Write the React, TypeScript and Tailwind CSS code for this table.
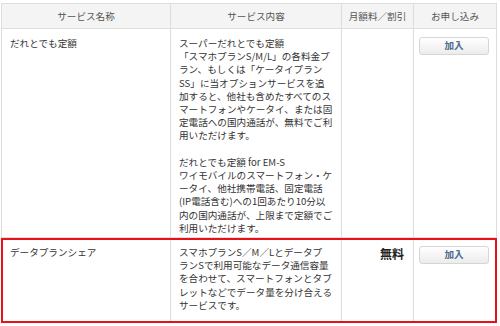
const cols = "grid grid-cols-[169px_171px_72px_82px]";

const headers = ["サービス名称", "サービス内容", "月額料／割引", "お申し込み"];

type Row = {
  name: string;
  body: string[][];
  price?: string;
  highlight?: boolean;
};

const rows: Row[] = [
  {
    name: "だれとでも定額",
    body: [
      [
        "スーパーだれとでも定額",
        "「スマホプランS/M/L」の各料金プ",
        "ラン、もしくは「ケータイプラン",
        "SS」に当オプションサービスを追",
        "加すると、他社も含めたすべてのス",
        "マートフォンやケータイ、または固",
        "定電話への国内通話が、無料でご利",
        "用いただけます。",
      ],
      [
        "だれとでも定額 for EM-S",
        "ワイモバイルのスマートフォン・ケ",
        "ータイ、他社携帯電話、固定電話",
        "(IP電話含む)への1回あたり10分以",
        "内の国内通話が、上限まで定額でご",
        "利用いただけます。",
      ],
    ],
  },
  {
    name: "データプランシェア",
    body: [
      [
        "スマホプランS／M／Lとデータプ",
        "ランSで利用可能なデータ通信容量",
        "を合わせて、スマートフォンとタブ",
        "レットなどでデータ量を分け合える",
        "サービスです。",
      ],
    ],
    price: "無料",
    highlight: true,
  },
];

function JoinButton() {
  return (
    <button className="w-[70px] h-[18px] flex items-center justify-center rounded-[3px] border border-[#d6d6d6] bg-gradient-to-b from-white to-[#ececec] text-[9.6px] font-bold text-[#4d6b8c] leading-none">
      加入
    </button>
  );
}

export default function App() {
  return (
    <div
      className="w-[500px] h-[326px] bg-white pt-[3px] pl-px text-[#333]"
      style={{ fontFamily: '"Noto Sans CJK JP", "Noto Sans", sans-serif' }}
    >
      <div className="w-[496px] border border-[#dddddd]">
        {/* header */}
        <div className={`${cols} h-[25px] bg-[#f4f4f4] border-b border-[#dddddd] text-[9.6px] text-[#555]`}>
          {headers.map((h, i) => (
            <div
              key={h}
              className={`flex items-center justify-center ${i < 3 ? "border-r border-[#dddddd]" : ""}`}
            >
              {h}
            </div>
          ))}
        </div>

        {rows.map((row, ri) => (
          <div
            key={row.name}
            className={`${cols} relative ${ri < rows.length - 1 ? "border-b border-[#dddddd]" : ""}`}
          >
            <div className="border-r border-[#dddddd] pl-[8px] pt-[8px] text-[9.6px] leading-[13.2px]">
              {row.name}
            </div>
            <div
              className={`border-r border-[#dddddd] pl-[8px] pt-[8px] text-[9.6px] leading-[13.2px] whitespace-nowrap ${
                row.highlight ? "pb-[9px]" : "pb-[2px]"
              }`}
            >
              {row.body.map((para, pi) => (
                <p key={pi} className={pi > 0 ? "mt-[13.2px]" : ""}>
                  {para.map((line, li) => (
                    <span key={li} className="block">
                      {line}
                    </span>
                  ))}
                </p>
              ))}
            </div>
            <div className="border-r border-[#dddddd] pt-[8px] pr-[9px] text-right text-[12px] leading-[16px] font-bold text-[#222]">
              {row.price}
            </div>
            <div className="pt-[8px] pl-[5px]">
              <JoinButton />
            </div>
            {row.highlight && (
              <div className="absolute -left-px -right-px top-0 -bottom-[2px] border-2 border-[#e8101a] pointer-events-none" />
            )}
          </div>
        ))}
      </div>
    </div>
  );
}
